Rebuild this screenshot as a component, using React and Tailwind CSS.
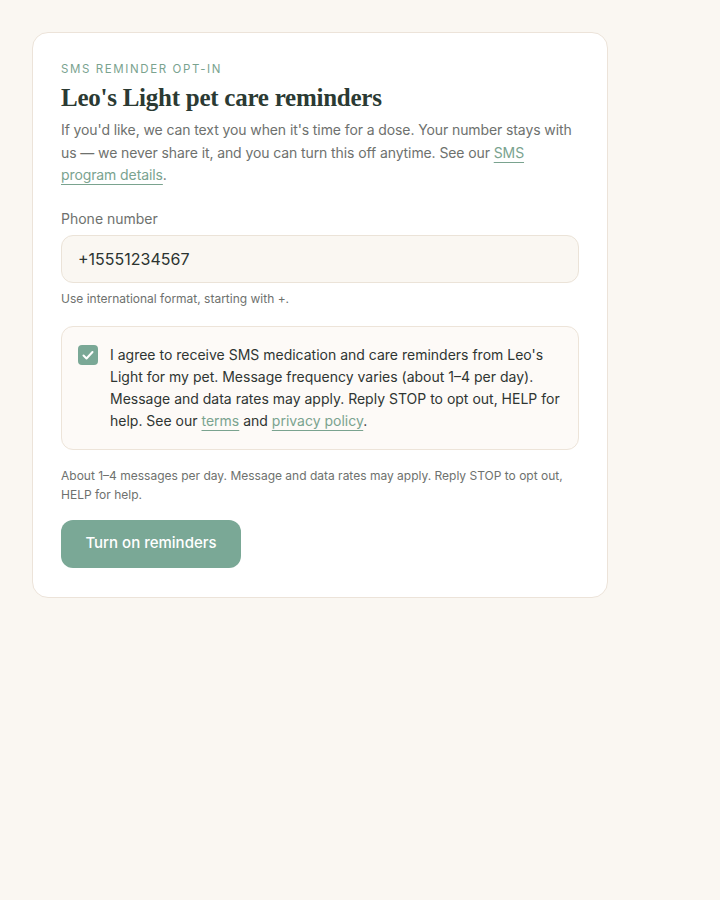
import { useState } from 'react';

function App() {
  const [phone, setPhone] = useState('+15551234567');
  const [agreed, setAgreed] = useState(true);

  return (
    <div className="min-h-screen bg-[#faf7f2] p-8 font-['Inter',sans-serif]">
      <div className="w-[576px] bg-white border border-[#ece3d9] rounded-2xl px-7 pt-[28px] pb-[29px]">
        <p className="text-[11.5px] leading-4 tracking-[0.14em] uppercase text-[#7aa38f]">
          SMS reminder opt-in
        </p>
        <h1 className="mt-[5px] text-[25px] leading-8 font-semibold text-[#2b3a33] font-['Liberation_Serif',serif] tracking-[-0.01em]">
          Leo's Light pet care reminders
        </h1>
        <p className="mt-[5px] text-[14px] leading-[22.5px] tracking-[-0.1px] text-[#6e716e]">
          If you'd like, we can text you when it's time for a dose. Your number stays with us — we never share it, and you can turn this off anytime. See our{' '}
          <a href="#" className="text-[#7aa38f] underline decoration-[#7aa38f] underline-offset-[4px]">
            SMS program details
          </a>
          .
        </p>

        {/* Phone */}
        <label className="block mt-[22px] text-[14px] leading-5 text-[#6e716e]">Phone number</label>
        <input
          value={phone}
          onChange={(e) => setPhone(e.target.value)}
          className="mt-[6px] w-full h-12 px-4 rounded-xl bg-[#faf7f2] border border-[#ebe3d8] text-[16px] text-[#2b3330] outline-none"
        />
        <p className="mt-[6px] text-[12px] leading-5 text-[#6e716e]">Use international format, starting with +.</p>

        {/* Consent */}
        <div className="mt-[17px] flex gap-3 rounded-xl border border-[#ede4d9] bg-[#fdfaf7] px-4 pt-[17px] pb-[17px]">
          <button
            onClick={() => setAgreed(!agreed)}
            className={`mt-[1px] w-5 h-5 shrink-0 rounded-[4px] flex items-center justify-center ${agreed ? 'bg-[#7aa896]' : 'bg-white border border-[#cfc7bc]'}`}
          >
            {agreed && (
              <svg width="14" height="14" viewBox="0 0 14 14" fill="none">
                <path d="M2.5 7.5l3 3 6-6.5" stroke="white" strokeWidth="2" strokeLinecap="round" strokeLinejoin="round" />
              </svg>
            )}
          </button>
          <p className="text-[14px] leading-[22px] text-[#2f3532]">
            I agree to receive SMS medication and care reminders from Leo's Light for my pet. Message frequency varies (about 1–4 per day). Message and data rates may apply. Reply STOP to opt out, HELP for help. See our{' '}
            <a href="#" className="text-[#7aa38f] underline decoration-[#7aa38f] underline-offset-[4px]">terms</a> and{' '}
            <a href="#" className="text-[#7aa38f] underline decoration-[#7aa38f] underline-offset-[4px]">privacy policy</a>.
          </p>
        </div>

        <p className="mt-[16px] text-[12px] leading-[19px] text-[#6e716e]">
          About 1–4 messages per day. Message and data rates may apply. Reply STOP to opt out, HELP for help.
        </p>

        <button className="mt-4 w-[180px] h-12 rounded-xl bg-[#7aa896] text-white text-[15px] font-medium">
          Turn on reminders
        </button>
      </div>
    </div>
  );
}

export default App;
